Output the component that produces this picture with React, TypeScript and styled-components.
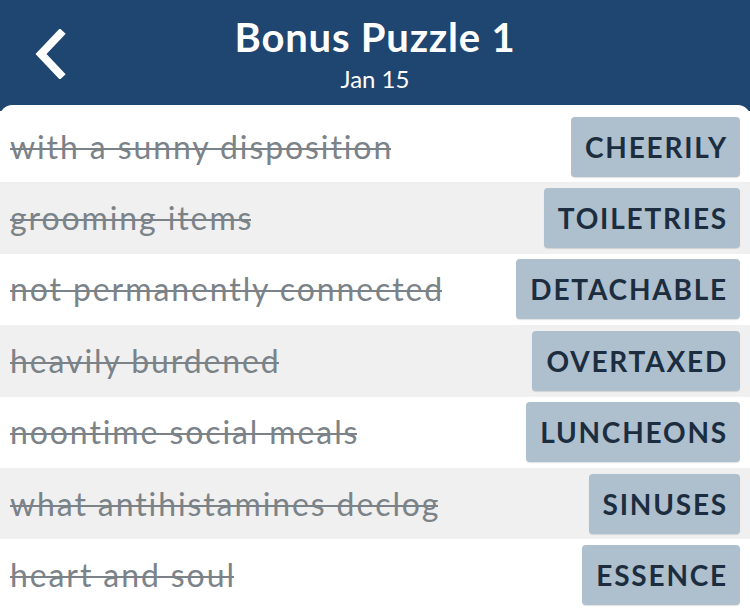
import React from "react";
import styled, { createGlobalStyle } from "styled-components";

const GlobalStyle = createGlobalStyle`
  html, body {
    margin: 0;
    padding: 0;
    background: #1f4571;
    font-family: "Lato", "Open Sans", sans-serif;
  }
`;

const Page = styled.div`
  width: 750px;
  height: 610px;
  display: flex;
  flex-direction: column;
  background: #1f4571;
  overflow: hidden;
`;

const Header = styled.header`
  height: 105px;
  display: flex;
  justify-content: center;
  position: relative;
  flex-shrink: 0;
`;

const BackButton = styled.button`
  position: absolute;
  left: 25px;
  top: 26px;
  width: 50px;
  height: 56px;
  border: 0;
  padding: 0;
  background: transparent;
  display: flex;
  align-items: center;
  justify-content: center;
`;

const Titles = styled.div`
  display: flex;
  flex-direction: column;
  align-items: center;
  color: #ffffff;
  padding-top: 13px;
`;

const Title = styled.h1`
  margin: 0;
  font-size: 40px;
  font-weight: 700;
  letter-spacing: 0.8px;
  line-height: 48px;
`;

const Subtitle = styled.span`
  margin-top: 4px;
  font-size: 24px;
  line-height: 28px;
`;

const Panel = styled.div`
  flex: 1;
  background: #ffffff;
  border-radius: 12px 12px 0 0;
  padding-top: 6px;
  display: flex;
  flex-direction: column;
`;

const Row = styled.div<{ $shaded: boolean }>`
  height: 71.4px;
  display: flex;
  align-items: center;
  justify-content: space-between;
  padding: 0 10px;
  background: ${(p) => (p.$shaded ? "#f0f0f0" : "#ffffff")};
  box-sizing: border-box;
`;

const Clue = styled.span`
  position: relative;
  color: #7b8389;
  font-size: 32px;
  line-height: 38px;
  letter-spacing: 1.9px;
  white-space: nowrap;

  /* strike line drawn here so it stops at the last letter, not its spacing */
  &::after {
    content: "";
    position: absolute;
    left: 0;
    right: 2px;
    top: 20px;
    height: 2px;
    background: #7b8389;
  }
`;

const Answer = styled.span`
  background: #aebfcd;
  color: #1c2d40;
  font-size: 28px;
  font-weight: 700;
  letter-spacing: 1.8px;
  height: 60px;
  padding: 0 12px 0 14px;
  display: flex;
  align-items: center;
  border-radius: 4px;
  box-shadow: 0 1px 1px rgba(0, 0, 0, 0.12);
`;

const items = [
  ["with a sunny disposition", "CHEERILY"],
  ["grooming items", "TOILETRIES"],
  ["not permanently connected", "DETACHABLE"],
  ["heavily burdened", "OVERTAXED"],
  ["noontime social meals", "LUNCHEONS"],
  ["what antihistamines declog", "SINUSES"],
  ["heart and soul", "ESSENCE"],
];

const App = () => {
  return (
    <Page>
      <GlobalStyle />
      <Header>
        <BackButton aria-label="Back">
          <svg width="34" height="50" viewBox="0 0 34 50">
            <path
              d="M27 5 L8 25 L27 45"
              fill="none"
              stroke="#ffffff"
              strokeWidth="8"
              strokeLinecap="square"
            />
          </svg>
        </BackButton>
        <Titles>
          <Title>Bonus Puzzle 1</Title>
          <Subtitle>Jan 15</Subtitle>
        </Titles>
      </Header>
      <Panel>
        {items.map(([clue, answer], i) => (
          <Row key={answer} $shaded={i % 2 === 1}>
            <Clue>{clue}</Clue>
            <Answer>{answer}</Answer>
          </Row>
        ))}
      </Panel>
    </Page>
  );
};

export default App;
